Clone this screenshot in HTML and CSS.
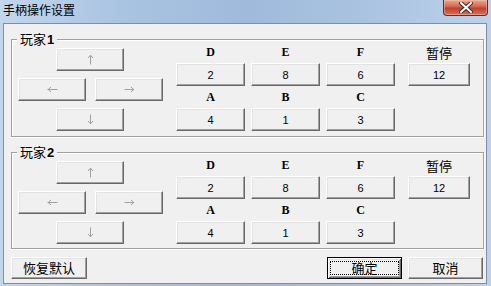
FILE: index.html
```html
<!DOCTYPE html>
<html lang="zh">
<head>
  <meta charset="UTF-8" />
  <title>手柄操作设置</title>
  <link rel="stylesheet" href="styles.css">
</head>
<body>
  <div class="window">
    <div class="titlebar">
      <span class="title">手柄操作设置</span>
      <div class="close">
        <svg width="14" height="11" viewBox="0 0 14 11">
          <path d="M2 1 L12 10 M12 1 L2 10" stroke="#4a2a26" stroke-width="4" stroke-linecap="square"/>
          <path d="M2 1 L12 10 M12 1 L2 10" stroke="#ffffff" stroke-width="2" stroke-linecap="square"/>
        </svg>
      </div>
    </div>

    <div class="client">
      <div class="group">
        <span class="legend">玩家<b>1</b></span>
        <div class="arrows">
          <div class="btn arrow up">
            <svg width="7" height="11" viewBox="0 0 7 11"><path d="M3.5 1 V10.5 M1 4 L3.5 1.2 L6 4" stroke="#a0a0a0" fill="none"/></svg>
          </div>
          <div class="arrow-row">
            <div class="btn arrow">
              <svg width="11" height="7" viewBox="0 0 11 7"><path d="M0.5 3.5 H10.5 M4 1 L1.2 3.5 L4 6" stroke="#a0a0a0" fill="none"/></svg>
            </div>
            <div class="btn arrow">
              <svg width="11" height="7" viewBox="0 0 11 7"><path d="M0.5 3.5 H10 M7 1 L9.8 3.5 L7 6" stroke="#a0a0a0" fill="none"/></svg>
            </div>
          </div>
          <div class="btn arrow up">
            <svg width="7" height="11" viewBox="0 0 7 11"><path d="M3.5 0.5 V10 M1 7 L3.5 9.8 L6 7" stroke="#a0a0a0" fill="none"/></svg>
          </div>
        </div>
        <div class="keys">
          <div class="label">D</div>
          <div class="label">E</div>
          <div class="label">F</div>
          <div class="label cjk pause">暂停</div>
          <div class="btn key">2</div>
          <div class="btn key">8</div>
          <div class="btn key">6</div>
          <div class="btn key pause">12</div>
          <div class="label">A</div>
          <div class="label">B</div>
          <div class="label">C</div>
          <div></div>
          <div class="btn key">4</div>
          <div class="btn key">1</div>
          <div class="btn key">3</div>
        </div>
      </div>

      <div class="group second">
        <span class="legend">玩家<b>2</b></span>
        <div class="arrows">
          <div class="btn arrow up">
            <svg width="7" height="11" viewBox="0 0 7 11"><path d="M3.5 1 V10.5 M1 4 L3.5 1.2 L6 4" stroke="#a0a0a0" fill="none"/></svg>
          </div>
          <div class="arrow-row">
            <div class="btn arrow">
              <svg width="11" height="7" viewBox="0 0 11 7"><path d="M0.5 3.5 H10.5 M4 1 L1.2 3.5 L4 6" stroke="#a0a0a0" fill="none"/></svg>
            </div>
            <div class="btn arrow">
              <svg width="11" height="7" viewBox="0 0 11 7"><path d="M0.5 3.5 H10 M7 1 L9.8 3.5 L7 6" stroke="#a0a0a0" fill="none"/></svg>
            </div>
          </div>
          <div class="btn arrow up">
            <svg width="7" height="11" viewBox="0 0 7 11"><path d="M3.5 0.5 V10 M1 7 L3.5 9.8 L6 7" stroke="#a0a0a0" fill="none"/></svg>
          </div>
        </div>
        <div class="keys">
          <div class="label">D</div>
          <div class="label">E</div>
          <div class="label">F</div>
          <div class="label cjk pause">暂停</div>
          <div class="btn key">2</div>
          <div class="btn key">8</div>
          <div class="btn key">6</div>
          <div class="btn key pause">12</div>
          <div class="label">A</div>
          <div class="label">B</div>
          <div class="label">C</div>
          <div></div>
          <div class="btn key">4</div>
          <div class="btn key">1</div>
          <div class="btn key">3</div>
        </div>
      </div>

      <div class="footer">
        <div class="btn cmd reset">恢复默认</div>
        <div class="spacer"></div>
        <div class="btn cmd default"><span class="focus">确定</span></div>
        <div class="btn cmd">取消</div>
      </div>
    </div>
  </div>
</body>
</html>
```

FILE: styles.css
```css
* {
  box-sizing: border-box;
}
html, body {
  margin: 0;
  width: 491px;
  height: 286px;
  overflow: hidden;
}
body {
  font-family: "Noto Sans CJK SC", "Liberation Sans", sans-serif;
  font-size: 12px;
  color: #000;
}
.window {
  width: 491px;
  height: 286px;
  display: flex;
  flex-direction: column;
  background: linear-gradient(90deg, #c3d6ec 0%, #a9c3e2 25%, #9fbadb 50%, #aac3e1 75%, #bdd2ea 100%);
}
.titlebar {
  height: 23px;
  display: flex;
  align-items: flex-start;
  justify-content: space-between;
  flex-shrink: 0;
}
.title {
  margin: 2px 0 0 3px;
  font-size: 12px;
  line-height: 15px;
  color: #000;
}
.close {
  width: 45px;
  height: 16px;
  margin-right: 3px;
  border: 1px solid #6e2a22;
  border-top: none;
  border-radius: 0 0 4px 4px;
  background: linear-gradient(180deg, #e8a792 0%, #d66d55 40%, #c2412e 55%, #d3735b 100%);
  box-shadow: inset 0 0 0 1px rgba(255, 200, 180, 0.45);
  display: flex;
  align-items: center;
  justify-content: center;
}
.close svg {
  display: block;
  margin-top: -1px;
}
.client {
  flex: 1;
  margin: 0 4px 2px 3px;
  border: 1px solid #7f8fa3;
  background: #f0f0f0;
  padding: 15px 2px 0 7px;
}
.group {
  position: relative;
  height: 98px;
  border: 1px solid #a0a0a0;
  box-shadow: 1px 1px 0 #fff, inset 1px 1px 0 #fff;
  display: flex;
  padding-left: 6px;
}
.group.second {
  margin-top: 15px;
  height: 97px;
}
.legend {
  position: absolute;
  top: -9px;
  left: 5px;
  padding: 0 3px 0 3px;
  background: #f0f0f0;
  font-size: 13px;
  line-height: 16px;
}
.legend b {
  font-family: "Liberation Sans", sans-serif;
  font-size: 13px;
  margin-left: 1px;
}
.btn {
  background: #f0f0f0;
  border: 1px solid;
  border-color: #fff #696969 #696969 #fff;
  box-shadow: inset -1px -1px 0 #a0a0a0, inset 1px 1px 0 #e3e3e3;
  display: flex;
  align-items: center;
  justify-content: center;
}
.arrows {
  margin-top: 8px;
  display: flex;
  flex-direction: column;
  gap: 7px;
  width: 145px;
}
.arrow {
  width: 68px;
  height: 23px;
}
.arrow.up {
  margin-left: 38px;
}
.arrow-row {
  display: flex;
  gap: 9px;
}
.arrow svg {
  display: block;
}
.keys {
  margin-left: 13px;
  display: grid;
  grid-template-columns: 69px 69px 69px 69px;
  grid-template-rows: 23px 23px 22px 23px;
  column-gap: 6px;
}
.keys .pause {
  margin-left: 7px;
}
.label {
  display: flex;
  align-items: flex-end;
  justify-content: center;
  padding-bottom: 5px;
  font-family: "Liberation Serif", serif;
  font-weight: bold;
  font-size: 12px;
  line-height: 12px;
}
.label.cjk {
  font-family: "Noto Sans CJK SC", sans-serif;
  font-weight: normal;
  font-size: 13px;
  line-height: 14px;
  padding-bottom: 3px;
}
.key {
  font-family: "Liberation Sans", sans-serif;
  font-size: 11px;
}
.footer {
  display: flex;
  margin-top: 8px;
  gap: 6px;
}
.spacer {
  flex: 1;
}
.cmd {
  width: 75px;
  height: 22px;
  font-size: 13px;
  line-height: 16px;
}
.reset {
  width: 76px;
}
.footer .cmd:last-child {
  margin-right: 1px;
}
.default {
  border-color: #000;
  box-shadow: inset 1px 1px 0 #fff, inset -1px -1px 0 #696969, inset 2px 2px 0 #e3e3e3, inset -2px -2px 0 #a0a0a0;
}
.focus {
  border: 1px dotted #000;
  width: 69px;
  height: 14px;
  display: flex;
  align-items: center;
  justify-content: center;
}
```
